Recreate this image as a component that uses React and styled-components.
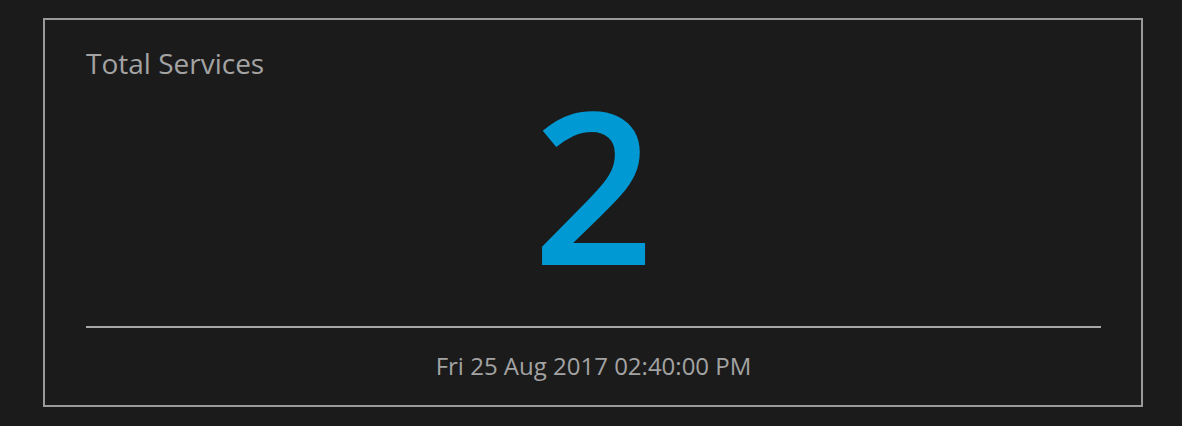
import styled, { createGlobalStyle } from 'styled-components';

const GlobalStyle = createGlobalStyle`
    html, body {
        margin: 0;
        padding: 0;
        background: #1b1b1b;
        font-family: "Open Sans", "Liberation Sans", sans-serif;
    }
`

const Page = styled.div`
    width: 1182px;
    height: 426px;
    box-sizing: border-box;
    padding: 18px 39px 0 43px;
    background: #1b1b1b;
`
const Card = styled.div`
    box-sizing: border-box;
    height: 389px;
    border: 2px solid #9a9a9a;
    padding: 24px 40px 0 41px;
    display: flex;
    flex-direction: column;
`
const Title = styled.p`
    margin: 0;
    font-size: 28px;
    line-height: 38px;
    color: #a3a3a3;
`
const Count = styled.p`
    margin: 0;
    text-align: center;
    font-size: 213px;
    line-height: 200px;
    font-weight: 600;
    color: #0099d4;
`
const Divider = styled.hr`
    margin: 44px 0 0;
    border: 0;
    height: 2px;
    background: #a8a8a8;
`
const Timestamp = styled.p`
    margin: 22px 0 0;
    text-align: center;
    font-size: 24px;
    line-height: 32px;
    color: #a3a3a3;
`

function App () {
    return (
        <>
            <GlobalStyle />
            <Page>
                <Card>
                    <Title>Total Services</Title>
                    <Count>2</Count>
                    <Divider />
                    <Timestamp>Fri 25 Aug 2017 02:40:00 PM</Timestamp>
                </Card>
            </Page>
        </>
    )
}

export default App
